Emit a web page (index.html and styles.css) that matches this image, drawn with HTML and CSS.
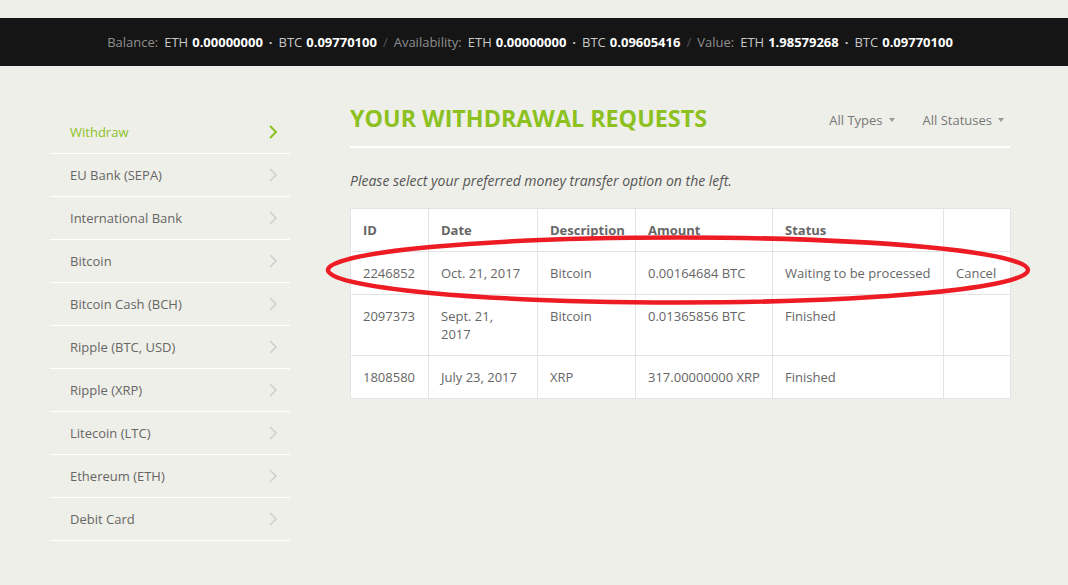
FILE: index.html
```html
<!DOCTYPE html>
<html>
<head>
<meta charset="utf-8">
<link rel="stylesheet" href="styles.css">
</head>
<body>
<div class="topgap"></div>
<div class="statusbar">
  <span class="lbl">Balance:</span>
  <span class="cur">ETH</span><b>0.00000000</b><span class="dot">·</span>
  <span class="cur">BTC</span><b>0.09770100</b><span class="slash">/</span>
  <span class="lbl">Availability:</span>
  <span class="cur">ETH</span><b>0.00000000</b><span class="dot">·</span>
  <span class="cur">BTC</span><b>0.09605416</b><span class="slash">/</span>
  <span class="lbl">Value:</span>
  <span class="cur">ETH</span><b>1.98579268</b><span class="dot">·</span>
  <span class="cur">BTC</span><b>0.09770100</b>
</div>
<div class="page">
  <nav class="sidebar">
    <a class="item active">Withdraw<svg class="chev" viewBox="0 0 10 16"><polyline points="2,2 8,8 2,14"/></svg></a>
    <a class="item">EU Bank (SEPA)<svg class="chev" viewBox="0 0 10 16"><polyline points="2,2 8,8 2,14"/></svg></a>
    <a class="item">International Bank<svg class="chev" viewBox="0 0 10 16"><polyline points="2,2 8,8 2,14"/></svg></a>
    <a class="item">Bitcoin<svg class="chev" viewBox="0 0 10 16"><polyline points="2,2 8,8 2,14"/></svg></a>
    <a class="item">Bitcoin Cash (BCH)<svg class="chev" viewBox="0 0 10 16"><polyline points="2,2 8,8 2,14"/></svg></a>
    <a class="item">Ripple (BTC, USD)<svg class="chev" viewBox="0 0 10 16"><polyline points="2,2 8,8 2,14"/></svg></a>
    <a class="item">Ripple (XRP)<svg class="chev" viewBox="0 0 10 16"><polyline points="2,2 8,8 2,14"/></svg></a>
    <a class="item">Litecoin (LTC)<svg class="chev" viewBox="0 0 10 16"><polyline points="2,2 8,8 2,14"/></svg></a>
    <a class="item">Ethereum (ETH)<svg class="chev" viewBox="0 0 10 16"><polyline points="2,2 8,8 2,14"/></svg></a>
    <a class="item">Debit Card<svg class="chev" viewBox="0 0 10 16"><polyline points="2,2 8,8 2,14"/></svg></a>
  </nav>
  <main class="main">
    <div class="header">
      <h1 class="title">YOUR WITHDRAWAL REQUESTS</h1>
      <div class="filters">
        <span class="filter">All Types<i class="caret"></i></span>
        <span class="filter">All Statuses<i class="caret"></i></span>
      </div>
    </div>
    <p class="hint">Please select your preferred money transfer option on the left.</p>
    <div class="tablewrap">
      <table class="requests">
        <colgroup>
          <col style="width:78px"><col style="width:109px"><col style="width:98px"><col style="width:137px"><col style="width:171px"><col style="width:67px">
        </colgroup>
        <thead>
          <tr><th>ID</th><th>Date</th><th>Description</th><th>Amount</th><th>Status</th><th></th></tr>
        </thead>
        <tbody>
          <tr><td>2246852</td><td>Oct. 21, 2017</td><td>Bitcoin</td><td>0.00164684 BTC</td><td>Waiting to be processed</td><td>Cancel</td></tr>
          <tr><td>2097373</td><td>Sept. 21, 2017</td><td>Bitcoin</td><td>0.01365856 BTC</td><td>Finished</td><td></td></tr>
          <tr><td>1808580</td><td>July 23, 2017</td><td>XRP</td><td>317.00000000 XRP</td><td>Finished</td><td></td></tr>
        </tbody>
      </table>
      <svg class="circle" viewBox="0 0 720 90"><ellipse cx="358" cy="41" rx="350" ry="32.5"/></svg>
    </div>
  </main>
</div>
</body>
</html>
```
FILE: styles.css
```css
html, body {
  margin: 0;
  padding: 0;
}
body {
  background: #efefe9;
  font-family: "Open Sans", "Liberation Sans", sans-serif;
  color: #666;
  width: 1068px;
  height: 585px;
  overflow: hidden;
}
.topgap {
  height: 18px;
}
.statusbar {
  height: 48px;
  padding-right: 8px;
  background: #151515;
  display: flex;
  align-items: center;
  justify-content: center;
  font-size: 13px;
  color: #8a8a8a;
  white-space: nowrap;
}
.statusbar .lbl {
  color: #8f8f8f;
  margin-right: 6px;
}
.statusbar .cur {
  color: #c8c8c8;
  margin-right: 4px;
}
.statusbar b {
  color: #fff;
  font-weight: 700;
}
.statusbar .dot {
  color: #c8c8c8;
  margin: 0 6px;
  font-weight: 700;
}
.statusbar .slash {
  color: #555;
  margin: 0 6px;
}
.page {
  display: flex;
  padding: 34px 0 0 50px;
}
.sidebar {
  width: 240px;
  margin-top: 11px;
  margin-right: 60px;
  display: flex;
  flex-direction: column;
}
.item {
  height: 42px;
  border-bottom: 1px solid #fff;
  display: flex;
  align-items: center;
  justify-content: space-between;
  padding: 0 12px 0 20px;
  font-size: 13px;
  color: #666;
}
.item.active {
  color: #8cc11f;
}
.chev {
  width: 10px;
  height: 16px;
  fill: none;
  stroke: #cfcfcf;
  stroke-width: 1.6;
}
.item.active .chev {
  stroke: #8cc11f;
  stroke-width: 2;
}
.main {
  width: 660px;
}
.header {
  display: flex;
  align-items: center;
  justify-content: space-between;
  height: 36px;
  padding-bottom: 10px;
  border-bottom: 2px solid #fff;
}
.title {
  margin: 0;
  font-size: 23.3px;
  font-weight: 700;
  color: #8cc11f;
  line-height: 32px;
}
.filters {
  display: flex;
  gap: 28px;
  padding-right: 6px;
  margin-top: 4px;
}
.filter {
  font-size: 13px;
  color: #777;
  display: flex;
  align-items: center;
}
.caret {
  display: inline-block;
  width: 0;
  height: 0;
  border-left: 3.5px solid transparent;
  border-right: 3.5px solid transparent;
  border-top: 4px solid #999;
  margin-left: 6px;
}
.hint {
  margin: 24px 0 18px;
  font-size: 14px;
  font-style: italic;
  color: #555;
  line-height: 18px;
}
.tablewrap {
  position: relative;
}
.requests {
  width: 660px;
  table-layout: fixed;
  border-collapse: collapse;
  background: #fff;
  font-size: 13px;
  color: #666;
}
.requests th, .requests td {
  border: 1px solid #e4e4e4;
  padding: 12px;
  line-height: 18px;
  text-align: left;
  vertical-align: top;
}
.requests th {
  font-weight: 700;
}
.circle {
  position: absolute;
  left: -30px;
  top: 21px;
  width: 720px;
  height: 90px;
  fill: none;
  stroke: #ed1c24;
  stroke-width: 4.5;
  pointer-events: none;
}
```
